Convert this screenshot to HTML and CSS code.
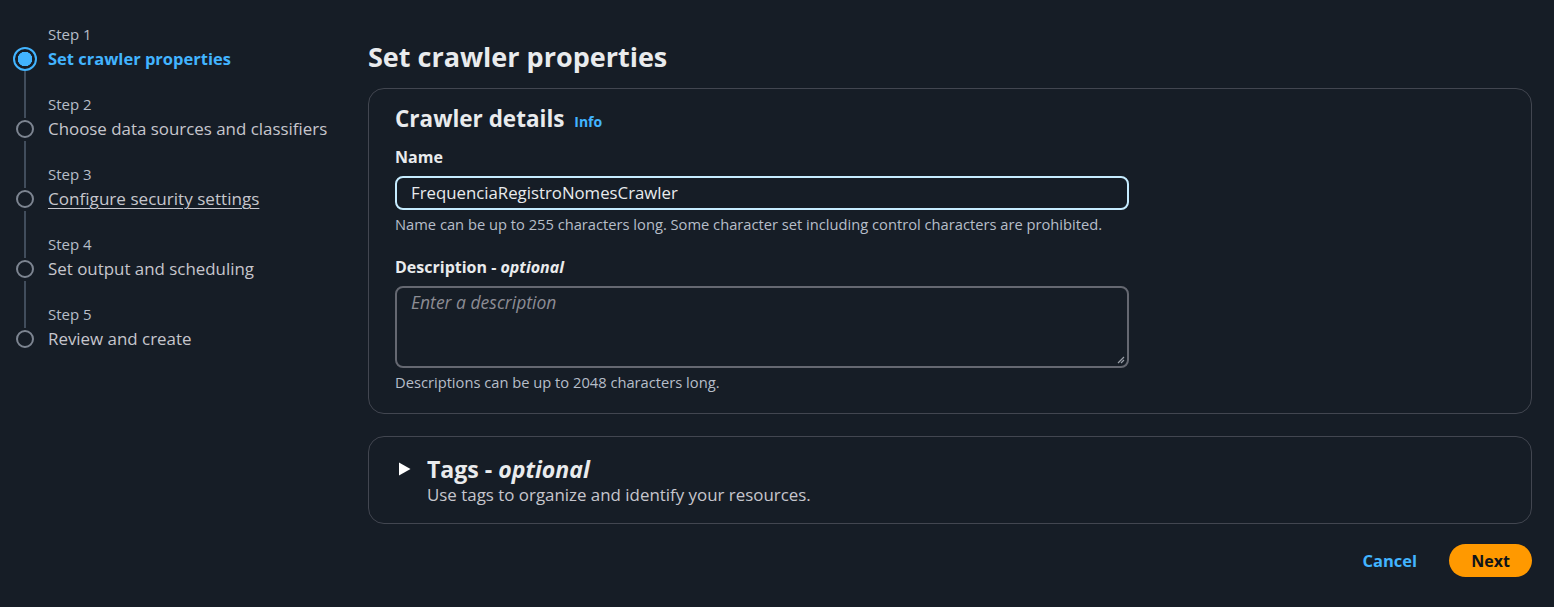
FILE: index.html
```html
<!DOCTYPE html>
<html lang="en">
<head>
<meta charset="utf-8">
<title>Set crawler properties</title>
<link rel="stylesheet" href="styles.css">
</head>
<body>
<div class="layout">
  <nav class="steps">
    <ol class="step-list">
      <li class="step active">
        <span class="step-num">Step 1</span>
        <div class="step-row"><span class="dot-wrap"><span class="dot"></span></span><span class="step-label">Set crawler properties</span></div>
      </li>
      <li class="step">
        <span class="step-num">Step 2</span>
        <div class="step-row"><span class="dot-wrap"><span class="dot"></span></span><span class="step-label">Choose data sources and classifiers</span></div>
      </li>
      <li class="step">
        <span class="step-num">Step 3</span>
        <div class="step-row"><span class="dot-wrap"><span class="dot"></span></span><a class="step-label link" href="#">Configure security settings</a></div>
      </li>
      <li class="step">
        <span class="step-num">Step 4</span>
        <div class="step-row"><span class="dot-wrap"><span class="dot"></span></span><span class="step-label">Set output and scheduling</span></div>
      </li>
      <li class="step last">
        <span class="step-num">Step 5</span>
        <div class="step-row"><span class="dot-wrap"><span class="dot"></span></span><span class="step-label">Review and create</span></div>
      </li>
    </ol>
  </nav>
  <main class="main">
    <h1 class="page-title">Set crawler properties</h1>
    <section class="card details">
      <h2 class="card-title">Crawler details <a class="info" href="#">Info</a></h2>
      <div class="field">
        <label class="label">Name</label>
        <div class="input focused">FrequenciaRegistroNomesCrawler</div>
        <p class="hint">Name can be up to 255 characters long. Some character set including control characters are prohibited.</p>
      </div>
      <div class="field">
        <label class="label">Description - <i>optional</i></label>
        <div class="textarea">
          <span class="placeholder">Enter a description</span>
          <svg class="grip" width="8" height="8" viewBox="0 0 8 8"><path d="M7 1 L1 7 M7 4 L4 7" stroke="#9aa0a8" stroke-width="1.2"/></svg>
        </div>
        <p class="hint">Descriptions can be up to 2048 characters long.</p>
      </div>
    </section>
    <section class="card tags">
      <div class="tags-row">
        <svg class="caret" width="13" height="14" viewBox="0 0 13 14"><path d="M1 0.5 L12.5 7 L1 13.5 Z" fill="#ffffff"/></svg>
        <div>
          <h2 class="card-title">Tags - <i>optional</i></h2>
          <p class="tags-desc">Use tags to organize and identify your resources.</p>
        </div>
      </div>
    </section>
    <div class="actions">
      <a class="cancel" href="#">Cancel</a>
      <button class="next">Next</button>
    </div>
  </main>
</div>
</body>
</html>
```

FILE: styles.css
```css
* { box-sizing: border-box; }
html, body { margin: 0; padding: 0; }
body {
  background: #161d26;
  color: #e9ebed;
  font-family: "Open Sans", "Noto Sans", Arial, sans-serif;
  font-size: 14px;
  width: 1554px;
  height: 607px;
  overflow: hidden;
}
.layout {
  display: flex;
  padding: 23px 22px 0 13px;
}
.steps {
  width: 355px;
  flex: none;
}
.step-list {
  list-style: none;
  margin: 0;
  padding: 0;
}
.step {
  display: flex;
  flex-direction: column;
  height: 70px;
  position: relative;
}
.step-num {
  color: #b6bec9;
  font-size: 15px;
  line-height: 22px;
  margin-left: 35px;
}
.step-row {
  display: flex;
  align-items: center;
  gap: 11px;
  height: 28px;
}
.dot-wrap {
  width: 24px;
  height: 24px;
  display: flex;
  align-items: center;
  justify-content: center;
  flex: none;
}
.dot {
  width: 18px;
  height: 18px;
  border-radius: 50%;
  border: 2.7px solid #7d8591;
}
.step::after {
  content: "";
  position: absolute;
  left: 11px;
  top: 48px;
  width: 2px;
  height: 47px;
  background: #414d5c;
}
.step.last::after { display: none; }
.step.active .dot {
  width: 24px;
  height: 24px;
  border: 2.7px solid #42b4ff;
  background: radial-gradient(circle, #42b4ff 0 7px, #161d26 7.5px);
}
.step-label {
  color: #c6c6cd;
  font-size: 16.9px;
  line-height: 22px;
}
.step.active .step-label {
  color: #42b4ff;
  font-weight: 700;
  font-size: 16.5px;
}
.step-label.link {
  font-size: 17.1px;
  text-decoration: underline;
  text-underline-offset: 3px;
  text-decoration-thickness: 1px;
}
.main {
  flex: 1;
  display: flex;
  flex-direction: column;
}
.page-title {
  margin: 16px 0 13px;
  font-size: 27px;
  line-height: 36px;
  font-weight: 700;
  color: #e9ebed;
}
.card {
  border: 1px solid #424650;
  border-radius: 16px;
  background: #161d26;
}
.details {
  padding: 15px 26px 21px;
}
.card-title {
  margin: 0;
  font-size: 22.5px;
  line-height: 30px;
  font-weight: 700;
  color: #e9ebed;
}
.tags .card-title { font-size: 23.1px; }
.info {
  color: #42b4ff;
  font-size: 14px;
  line-height: 1;
  font-weight: 700;
  text-decoration: none;
  margin-left: 4px;
}
.field {
  margin-top: 12px;
  width: 734px;
}
.field + .field { margin-top: 22px; }
.label {
  display: block;
  font-weight: 700;
  font-size: 16px;
  line-height: 22px;
  color: #e9ebed;
  margin-bottom: 8px;
}
.label i { font-style: italic; }
.input {
  height: 34px;
  border: 2px solid #c6ecff;
  border-radius: 8px;
  padding: 4px 14px;
  font-size: 16.8px;
  line-height: 22px;
  color: #e9ebed;
}
.textarea {
  height: 82px;
  border: 2px solid #656871;
  border-radius: 8px;
  padding: 2px 14px;
  position: relative;
  line-height: 24px;
}
.placeholder {
  color: #8c8c94;
  font-style: italic;
  font-size: 17.5px;
}
.grip {
  position: absolute;
  right: 2px;
  bottom: 2px;
}
.hint {
  margin: 4px 0 0;
  font-size: 14.7px;
  line-height: 20px;
  color: #b6bec9;
}
.tags {
  margin-top: 22px;
  padding: 17px 29px 17px;
}
.tags-row {
  display: flex;
  gap: 16px;
  align-items: flex-start;
}
.caret { margin-top: 8px; flex: none; }
.tags-desc {
  margin: 0;
  font-size: 16.9px;
  line-height: 22px;
  color: #c6c6cd;
}
.actions {
  display: flex;
  justify-content: flex-end;
  align-items: center;
  gap: 32px;
  margin-top: 20px;
}
.cancel {
  color: #42b4ff;
  font-weight: 700;
  font-size: 16.5px;
  text-decoration: none;
}
.next {
  background: #ff9900;
  color: #0f141a;
  border: none;
  border-radius: 17px;
  height: 33px;
  width: 83px;
  font-family: inherit;
  font-size: 16px;
  font-weight: 700;
}
```
